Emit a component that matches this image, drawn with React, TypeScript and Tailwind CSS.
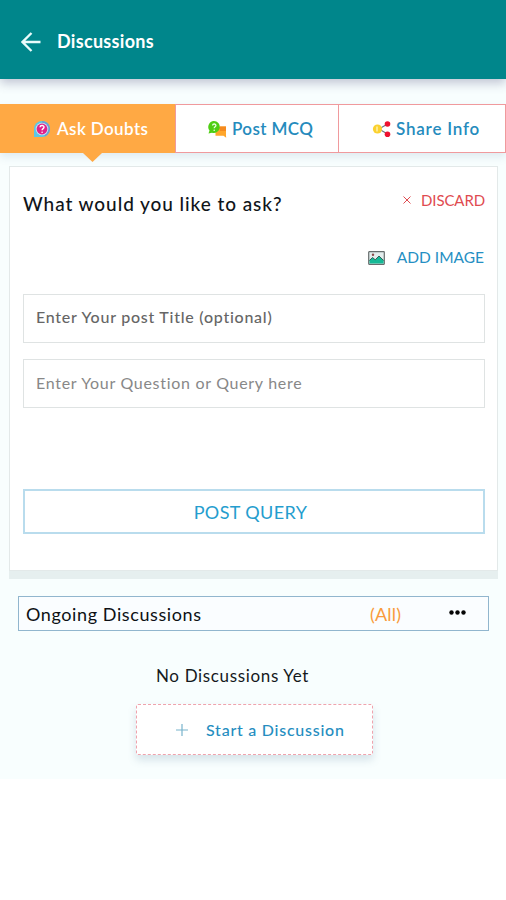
import type { ReactNode } from 'react'

function ArrowIcon() {
  return (
    <svg width="20" height="20" viewBox="0 0 20 20" fill="none" stroke="#e9fbfb" strokeWidth="2.3">
      <path d="M19.5 10H1.5M10.5 1L1.5 10l9 9" />
    </svg>
  )
}

function DoubtIcon() {
  return (
    <svg width="18" height="18" viewBox="0 0 18 18">
      <path d="M1 17V9a8 8 0 1 1 8 8z" fill="#5bc8e6" />
      <path d="M9 1a8 8 0 0 1 3 15.4L9 9z" fill="#6d9fd0" />
      <circle cx="9" cy="9" r="6.3" fill="#c9e3f2" />
      <circle cx="9" cy="9" r="5.4" fill="#e0218a" />
      <path d="M7 7.2c.2-2.4 4.2-2.2 4 .1-.1 1.3-1.9 1.4-1.9 3" fill="none" stroke="#fff" strokeWidth="1.4" />
      <circle cx="9.1" cy="12.2" r=".8" fill="#fff" />
    </svg>
  )
}

function ChatIcon() {
  return (
    <svg width="20" height="18" viewBox="0 0 19 18">
      <path d="M8 6.5h10.5v9.2l.2 2-2.7-2H8z" fill="#ffa62b" />
      <path d="M12.5 6.5h6v4.5h-6z" fill="#f58a1f" />
      <path d="M6.3 1a6 6 0 1 1-1.8 11.7L1 13.6l1-3A6 6 0 0 1 6.3 1z" fill="#4fce14" />
      <path d="M5 5.5c.3-2.1 3.5-1.900 3.400.1-.1 1.200-1.700 1.200-1.700 2.600" fill="none" stroke="#e9ffe0" strokeWidth="1.3" />
      <circle cx="6.7" cy="10.3" r=".8" fill="#e9ffe0" />
    </svg>
  )
}

function ShareIcon() {
  return (
    <svg width="19" height="18" viewBox="0 0 19 18">
      <path d="M15.5 4L7 9l8.5 5" fill="none" stroke="#6b7480" strokeWidth="1.1" />
      <circle cx="5.5" cy="9" r="4.6" fill="#fbd12f" />
      <path d="M5 6.5v5" stroke="#fff0a8" strokeWidth="1.5" />
      <circle cx="15.5" cy="4" r="2.8" fill="#ee1230" />
      <circle cx="15.5" cy="14.3" r="2.8" fill="#ee1230" />
    </svg>
  )
}

function ImageIcon() {
  return (
    <svg width="17" height="14" viewBox="0 0 17 14">
      <rect x=".7" y=".7" width="15.6" height="12.6" rx=".5" fill="#e4eeee" stroke="#666d6d" strokeWidth="1.2" />
      <path d="M1.5 12.6V9l3-2.5 2.7 2.3L11 5l4.6 4v3.6z" fill="#15b996" />
      <path d="M1.5 9.5l3-3 2.7 2.3L11 5l4.5 4.5" fill="none" stroke="#365f59" />
      <circle cx="5" cy="3.8" r="1.2" fill="#8b4b4b" />
    </svg>
  )
}

function Tab({ icon, children }: { icon: ReactNode; children: ReactNode }) {
  return (
    <div className="flex items-center gap-[5px] border border-[#f09a9d] bg-white text-[#258bbd]">
      {icon}
      {children}
    </div>
  )
}

export default function App() {
  return (
    <div className="h-[900px] w-[506px] overflow-hidden bg-white font-['Lato','Noto_Sans',sans-serif] whitespace-nowrap">
      <div className="h-[779px] bg-[#f8fefe]">
        <header className="flex h-[79px] items-center gap-[16px] bg-[#00868b] pt-[4px] pl-[21px] shadow-[0_4px_10px_rgba(60,60,110,0.3)]">
          <ArrowIcon />
          <h1 className="pb-px text-[18px] leading-6 font-bold tracking-[0.3px] text-white">Discussions</h1>
        </header>

        <nav className="mt-[25px] grid h-[49px] grid-cols-[175px_163px_168px] text-[17px] font-semibold shadow-[0_4px_8px_rgba(90,130,160,0.15)]">
          <div className="relative flex items-center gap-[6px] bg-[#ffa944] pt-px pl-[33px] tracking-[0.4px] text-white">
            <DoubtIcon />
            Ask Doubts
            <span className="absolute top-full left-[83px] h-[9px] w-[19px] bg-[#ffa944] [clip-path:polygon(0_0,100%_0,50%_100%)]" />
          </div>
          <div className="-mr-px grid tracking-[0.4px] [&>div]:pt-px [&>div]:pl-[31px]">
            <Tab icon={<ChatIcon />}>Post MCQ</Tab>
          </div>
          <div className="grid tracking-[0.8px] [&>div]:pt-px [&>div]:pl-[33px]">
            <Tab icon={<ShareIcon />}>Share Info</Tab>
          </div>
        </nav>

        <section className="mt-[13px] ml-[9px] h-[405px] w-[489px] border-[1.5px] border-[#e3e9e9] bg-white pr-[12px] pl-[13px] shadow-[0_8px_0_#e6efef]">
          <div className="flex justify-between pt-[24px]">
            <h2 className="text-[19px] leading-[26px] font-medium tracking-[0.93px] text-[#10151a]">What would you like to ask?</h2>
            <button className="flex h-[18px] items-center gap-[10px] text-[15px] text-[#df4b50]">
              <svg width="8" height="8" viewBox="0 0 8 8" stroke="currentColor"><path d="M.5.5l7 7M7.5.5l-7 7" /></svg>
              <span className="tracking-[-0.1px]">DISCARD</span>
            </button>
          </div>
          <button className="mt-[30px] ml-auto flex h-[22px] items-center gap-[12px] pr-px text-[15.5px] text-[#258fc3]">
            <ImageIcon />
            ADD IMAGE
          </button>
          <div className="mt-[25px] flex h-[49px] items-center border-[1.5px] border-[#dfe3e3] pb-[4px] pl-[12px] text-[16px] font-medium tracking-[0.75px] text-[#666]">
            Enter Your post Title (optional)
          </div>
          <div className="mt-[16px] flex h-[49px] items-center border-[1.5px] border-[#dfe3e3] pb-[2px] pl-[12px] text-[16px] tracking-[0.7px] text-[#888]">
            Enter Your Question or Query here
          </div>
          <button className="mt-[81px] flex h-[45px] w-full items-center justify-center border-2 border-[#b9dced] pt-px pr-[7px] text-[18px] tracking-[0.4px] text-[#249dce]">
            POST QUERY
          </button>
        </section>

        <div className="mt-[25px] ml-[18px] flex h-[35px] w-[471px] items-center border-[1.5px] border-[#91b6ce] bg-[#fafdff] pt-[2px] pl-[7px] text-[18px] text-[#0d1115]">
          <span className="w-[344px] tracking-[0.6px]">Ongoing Discussions</span>
          <span className="w-[79px] tracking-[0.2px] text-[#f99b3c]">(All)</span>
          <svg className="mb-[5px]" width="17" height="5" viewBox="0 0 17 5" fill="#050505">
            <circle cx="2.5" cy="2.5" r="2.2" />
            <circle cx="8.5" cy="2.5" r="2.2" />
            <circle cx="14.5" cy="2.5" r="2.2" />
          </svg>
        </div>

        <p className="mt-[33px] ml-[156px] text-[17px] leading-6 tracking-[0.65px] text-[#15191c]">No Discussions Yet</p>
        <button className="mt-[16px] ml-[136px] flex h-[51px] w-[237px] items-center gap-[18px] rounded-[2px] border-[1.5px] border-dashed border-[#efa3ad] bg-white pt-px pl-[39px] text-[16px] font-medium tracking-[0.75px] text-[#258dc0] shadow-[0_5px_8px_rgba(80,120,150,0.2)]">
          <svg width="12" height="12" viewBox="0 0 12 12" stroke="#78b3cc" strokeWidth="1.2"><path d="M6 0v12M0 6h12" /></svg>
          Start a Discussion
        </button>
      </div>
    </div>
  )
}
